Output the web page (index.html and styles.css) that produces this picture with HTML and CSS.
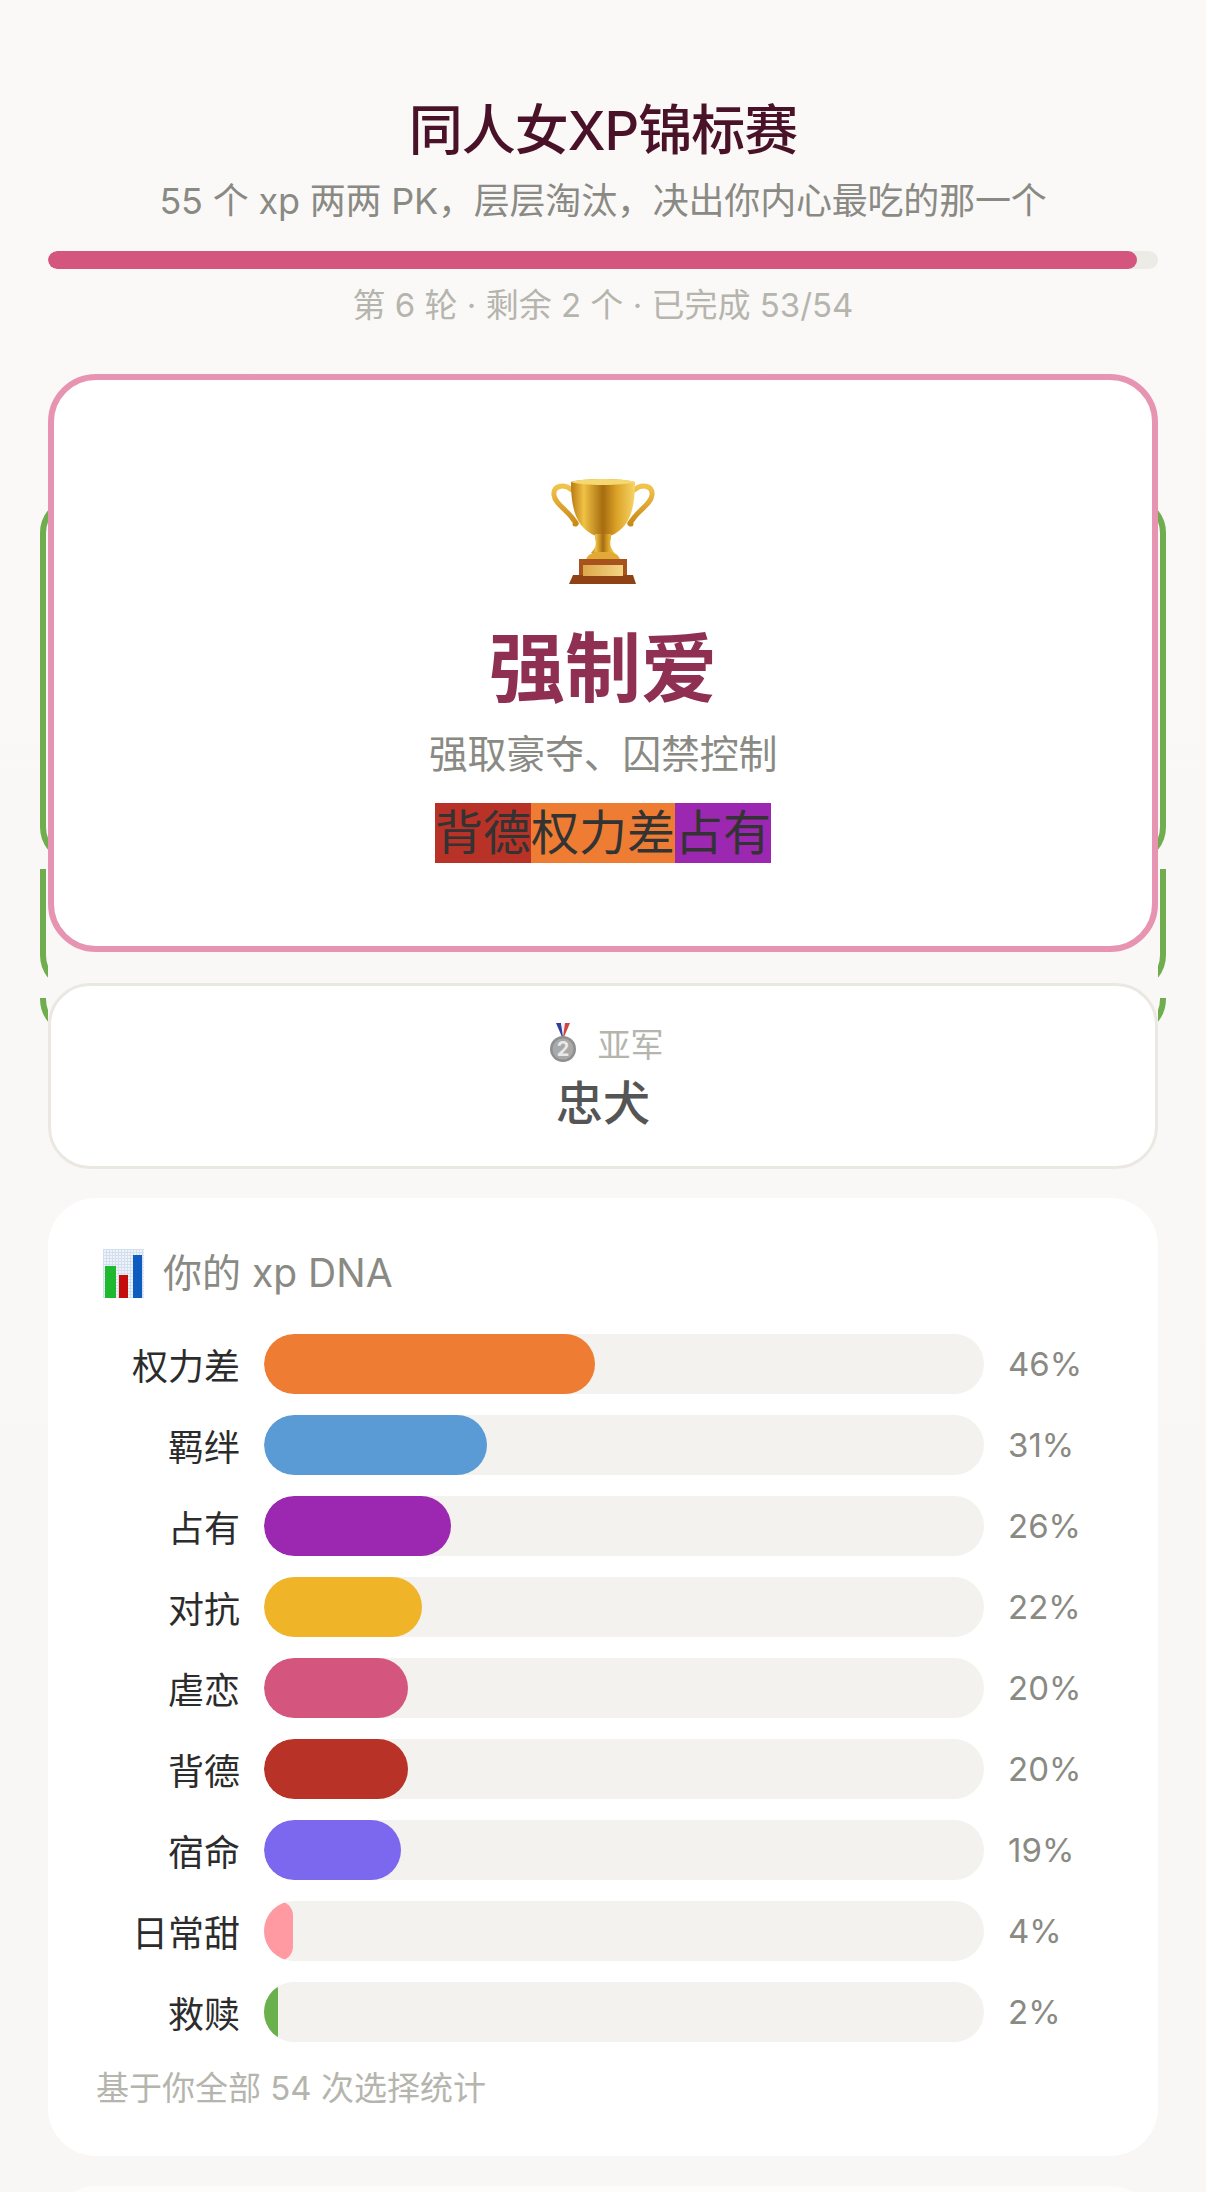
FILE: index.html
```html
<!DOCTYPE html>
<html lang="zh-CN">
<head>
    <meta charset="UTF-8">
    <title>同人女XP锦标赛</title>
    <link rel="stylesheet" href="styles.css">
</head>
<body>
    <div class="page">
        <header class="top">
            <h1>同人女XP锦标赛</h1>
            <p class="subtitle">55 个 xp 两两 PK，层层淘汰，决出你内心最吃的那一个</p>
            <div class="progress"><div class="progress-fill" style="width: 98.15%"></div></div>
            <p class="round">第 6 轮 · 剩余 2 个 · 已完成 53/54</p>
        </header>

        <div class="stage">
            <!-- leftover match cards peeking out behind the result -->
            <div class="ghost ghost-1"></div>
            <div class="ghost ghost-2"></div>
            <div class="ghost ghost-3"></div>

            <section class="winner">
                <svg class="trophy" viewBox="0 0 104 107" width="104" height="107">
                    <defs>
                        <linearGradient id="cupGold" x1="0" x2="1" y1="0" y2="0">
                            <stop offset="0" stop-color="#b97a14"/>
                            <stop offset="0.2" stop-color="#f0c244"/>
                            <stop offset="0.5" stop-color="#a66c10"/>
                            <stop offset="0.72" stop-color="#dda428"/>
                            <stop offset="1" stop-color="#f6d566"/>
                        </linearGradient>
                        <linearGradient id="handleGold" x1="0" x2="0" y1="0" y2="1">
                            <stop offset="0" stop-color="#f2c34a"/>
                            <stop offset="1" stop-color="#c98a18"/>
                        </linearGradient>
                        <linearGradient id="plaque" x1="0" x2="1" y1="0" y2="0">
                            <stop offset="0" stop-color="#dca84a"/>
                            <stop offset="1" stop-color="#f4d484"/>
                        </linearGradient>
                    </defs>
                    <path d="M21 12C12 5 2 8 3 17C4 26 15 31 22 41C24 44 27 46 24 46" fill="none" stroke="url(#handleGold)" stroke-width="5" stroke-linecap="round"/>
                    <path d="M83 12C92 5 102 8 101 17C100 26 89 31 82 41C80 44 77 46 80 46" fill="none" stroke="url(#handleGold)" stroke-width="5" stroke-linecap="round"/>
                    <path d="M20 4C30 0 73 0 84 4C84 28 80 50 59 58L45 58C24 50 20 28 20 4Z" fill="url(#cupGold)"/>
                    <path d="M20 4C30 0 73 0 84 4C73 8 30 8 20 4Z" fill="#f6d873"/>
                    <path d="M44 56H60V61C58 66 60 71 64 75H40C44 71 46 66 44 61Z" fill="url(#cupGold)"/>
                    <path d="M35 82C36 77 41 75 44 74H60C64 75 68 77 69 82Z" fill="#e0aa34"/>
                    <path d="M28 81H76V98H28Z" fill="#a8521d"/>
                    <path d="M22 97H82L85 106H18Z" fill="#8f4213"/>
                    <rect x="32" y="87" width="40" height="11" fill="url(#plaque)"/>
                </svg>
                <h2 class="winner-name">强制爱</h2>
                <p class="winner-desc">强取豪夺、囚禁控制</p>
                <div class="tags">
                    <span class="tag c-beide">背德</span><span class="tag c-quanli">权力差</span><span class="tag c-zhanyou">占有</span>
                </div>
            </section>

            <section class="runner-up">
                <div class="runner-label">
                    <svg class="medal" viewBox="0 0 30 39" width="30" height="39">
                        <path d="M8 0H13L15 14H14Z" fill="#2f3f9e"/>
                        <path d="M13 0H17L15.5 11Z" fill="#eef0f6"/>
                        <path d="M22 0H17L15 14H16Z" fill="#cf4540"/>
                        <circle cx="15" cy="26" r="13" fill="#8f8f8f"/>
                        <circle cx="15" cy="26" r="10.5" fill="#a9a9a9"/>
                        <text x="15" y="33" class="medal-num">2</text>
                    </svg>
                    <span>亚军</span>
                </div>
                <div class="runner-name">忠犬</div>
            </section>
        </div>

        <section class="dna">
            <h3 class="dna-title">
                <svg class="chart" viewBox="0 0 41 49" width="41" height="49">
                    <defs>
                        <pattern id="chartGrid" width="3" height="3" patternUnits="userSpaceOnUse">
                            <rect width="3" height="3" fill="#eef3f9"/>
                            <rect width="1" height="3" fill="#d3dfec"/>
                            <rect width="3" height="1" fill="#d3dfec"/>
                        </pattern>
                    </defs>
                    <rect width="41" height="49" fill="url(#chartGrid)"/>
                    <rect x="2" y="17" width="11" height="32" fill="#1fb92f"/>
                    <rect x="16" y="26" width="9" height="23" fill="#c40c0c"/>
                    <rect x="30" y="6" width="9" height="43" fill="#0f5cc0"/>
                </svg>
                <span class="dna-label">你的 xp DNA</span>
            </h3>
            <div class="rows">
                <div class="row"><span class="row-name">权力差</span><div class="track"><div class="fill c-quanli" style="width: 46%"></div></div><span class="row-pct">46%</span></div>
                <div class="row"><span class="row-name">羁绊</span><div class="track"><div class="fill c-jiban" style="width: 31%"></div></div><span class="row-pct">31%</span></div>
                <div class="row"><span class="row-name">占有</span><div class="track"><div class="fill c-zhanyou" style="width: 26%"></div></div><span class="row-pct">26%</span></div>
                <div class="row"><span class="row-name">对抗</span><div class="track"><div class="fill c-duikang" style="width: 22%"></div></div><span class="row-pct">22%</span></div>
                <div class="row"><span class="row-name">虐恋</span><div class="track"><div class="fill c-nuelian" style="width: 20%"></div></div><span class="row-pct">20%</span></div>
                <div class="row"><span class="row-name">背德</span><div class="track"><div class="fill c-beide" style="width: 20%"></div></div><span class="row-pct">20%</span></div>
                <div class="row"><span class="row-name">宿命</span><div class="track"><div class="fill c-suming" style="width: 19%"></div></div><span class="row-pct">19%</span></div>
                <div class="row"><span class="row-name">日常甜</span><div class="track"><div class="fill c-tian" style="width: 4%"></div></div><span class="row-pct">4%</span></div>
                <div class="row"><span class="row-name">救赎</span><div class="track"><div class="fill c-jiushu" style="width: 2%"></div></div><span class="row-pct">2%</span></div>
            </div>
            <p class="dna-note">基于你全部 54 次选择统计</p>
        </section>

        <div class="next-card"></div>
    </div>
</body>
</html>
```

FILE: styles.css
```css
html, body { margin: 0; padding: 0; height: 2192px; overflow: hidden; }
body { font-family: Inter, "Noto Sans CJK SC", sans-serif; background: linear-gradient(#fbf9f8, #f8f7f5); }
h1, h2, h3, p { margin: 0; font-weight: normal; }

.page { height: 2192px; box-sizing: border-box; overflow: hidden; padding: 95px 48px 0; }

.top { text-align: center; }
.top h1 { font-size: 54px; line-height: 72px; font-weight: 500; letter-spacing: -1px; color: #4a1228; }
.subtitle { margin-top: 10px; font-size: 36px; line-height: 48px; letter-spacing: -0.2px; color: #8a8a84; }
.progress { margin-top: 26px; height: 18px; background: #ecebe6; border-radius: 9px; overflow: hidden; }
.progress-fill { height: 100%; background: #d4567e; border-radius: 9px; }
.round { margin-top: 15px; font-size: 33px; line-height: 42px; color: #b5b5ae; }

.stage { position: relative; margin-top: 48px; }
/* only the two side strips of these show, so clip the middle away */
.ghost { position: absolute; left: -8px; right: -8px; border: 6px solid #6fad4f; border-radius: 36px; box-sizing: border-box; }
.ghost-1 { top: 123px; height: 366px; clip-path: polygon(0 0, 8px 0, 8px 100%, calc(100% - 8px) 100%, calc(100% - 8px) 0, 100% 0, 100% 100%, 0 100%); }
.ghost-2 { top: 445px; height: 172px; clip-path: polygon(0 50px, 8px 50px, 8px 100%, calc(100% - 8px) 100%, calc(100% - 8px) 50px, 100% 50px, 100% 100%, 0 100%); }
.ghost-3 { top: 570px; height: 91px; clip-path: polygon(0 54px, 8px 54px, 8px 100%, calc(100% - 8px) 100%, calc(100% - 8px) 54px, 100% 54px, 100% 100%, 0 100%); }

.winner { position: relative; height: 578px; box-sizing: border-box; padding-top: 98px; background: white; border: 6px solid #e794b3; border-radius: 48px; text-align: center; }
.trophy { display: block; margin: 0 auto; }
.winner-name { margin-top: 35px; font-size: 76px; line-height: 96px; font-weight: bold; color: #8f2f52; }
.winner-desc { margin-top: 11px; font-size: 39px; line-height: 54px; letter-spacing: -0.3px; color: #8a8a84; }
.tags { display: flex; justify-content: center; margin-top: 22px; }
.tag { display: block; height: 60px; font-size: 48px; line-height: 60px; color: #333; }

.runner-up { position: relative; margin-top: 31px; height: 186px; box-sizing: border-box; padding-top: 37px; background: white; border: 3px solid #ebe8e2; border-radius: 42px; text-align: center; }
.runner-label { display: flex; justify-content: center; align-items: center; gap: 20px; height: 39px; margin-left: 5px; font-size: 33px; color: #b5b5ae; }
.medal { display: block; }
.medal-num { font-size: 20px; font-weight: bold; text-anchor: middle; fill: #e8e8e8; }
.runner-name { margin-top: 11px; font-size: 47px; line-height: 60px; font-weight: 500; color: #555; }

.dna { margin-top: 29px; height: 958px; box-sizing: border-box; padding: 48px 48px 0; background: white; border-radius: 48px; }
.dna-title { display: flex; align-items: center; gap: 19px; height: 49px; margin-top: 3px; font-size: 39px; color: #8a8a84; }
.dna-label { margin-top: -8px; }
.chart { display: block; margin-left: 7px; }
.rows { display: flex; flex-direction: column; gap: 21px; margin-top: 36px; }
.row { display: flex; align-items: center; gap: 24px; }
.row-name { width: 144px; text-align: right; font-size: 36px; color: #2c2c2c; }
.track { width: 720px; height: 60px; background: #f3f2ee; border-radius: 30px; overflow: hidden; }
.fill { height: 100%; border-radius: 30px; }
.row-pct { font-size: 33px; color: #8a8a84; }
.dna-note { margin-top: 25px; font-size: 33px; line-height: 42px; color: #b5b5ae; }

.next-card { margin-top: 30px; height: 200px; background: #fdfcfb; border-radius: 48px; }

.c-beide { background: #b83227; }
.c-quanli { background: #ee7d33; }
.c-zhanyou { background: #9c27b0; }
.c-jiban { background: #5b9bd5; }
.c-duikang { background: #f0b429; }
.c-nuelian { background: #d4567e; }
.c-suming { background: #7b68ee; }
.c-tian { background: #ff9aa2; }
.c-jiushu { background: #6ab04c; }
```
